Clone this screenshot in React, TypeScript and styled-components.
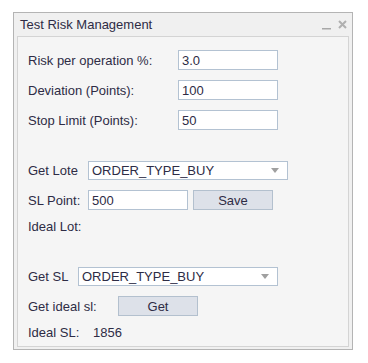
import styled, { createGlobalStyle } from 'styled-components';

const GlobalStyle = createGlobalStyle`
  html, body {
    margin: 0;
    padding: 0;
    background: #ffffff;
  }
  body {
    font-family: "Liberation Sans", Arial, sans-serif;
    color: #2e2c45;
  }
`;

const Page = styled.div`
  padding: 12px 0 0 13px;
`;

const Window = styled.div`
  width: 338px;
  height: 336px;
  border: 1px solid #b4b4b4;
  background: #f0f0f0;
  display: flex;
  flex-direction: column;
`;

const TitleBar = styled.div`
  height: 23px;
  display: flex;
  align-items: center;
  padding: 0 4px 0 6px;
`;

const Title = styled.div`
  flex: 1;
  font-size: 13px;
  color: #2e2c45;
`;

const TitleButton = styled.span`
  width: 12px;
  height: 12px;
  display: flex;
  align-items: center;
  justify-content: center;
  margin-left: 3px;
`;

const Panel = styled.div`
  flex: 1;
  margin: 0 3px 2px 3px;
  border: 1px solid #d4d4d4;
  background: #f5f5f5;
  padding: 13px 0 0 10px;
  display: flex;
  flex-direction: column;
`;

const Section = styled.div<{ $gap: number; $top: number }>`
  display: flex;
  flex-direction: column;
  gap: ${({ $gap }) => $gap}px;
  margin-top: ${({ $top }) => $top}px;
`;

const Row = styled.div<{ $h?: number }>`
  display: flex;
  align-items: center;
  height: ${({ $h }) => $h ?? 20}px;
`;

const Label = styled.span<{ $w: number }>`
  width: ${({ $w }) => $w}px;
  flex-shrink: 0;
  font-size: 13px;
  white-space: nowrap;
`;

const Value = styled.span`
  font-size: 13px;
`;

const Input = styled.div<{ $w: number }>`
  box-sizing: border-box;
  width: ${({ $w }) => $w}px;
  height: 100%;
  border: 1px solid #b3c2d2;
  background: #ffffff;
  font-size: 13px;
  display: flex;
  align-items: center;
  padding-left: 3px;
`;

const Select = styled(Input)`
  justify-content: space-between;
  padding-right: 8px;
`;

const Arrow = styled.span`
  width: 0;
  height: 0;
  border-left: 4px solid transparent;
  border-right: 4px solid transparent;
  border-top: 5px solid #a0a0a0;
`;

const Button = styled.div<{ $w: number; $ml?: number }>`
  box-sizing: border-box;
  width: ${({ $w }) => $w}px;
  height: 100%;
  margin-left: ${({ $ml }) => $ml ?? 0}px;
  border: 1px solid #b3c0ce;
  background: #dde1e9;
  font-size: 13px;
  display: flex;
  align-items: center;
  justify-content: center;
`;

export default function App() {
  return (
    <>
      <GlobalStyle />
      <Page>
        <Window>
          <TitleBar>
            <Title>Test Risk Management</Title>
            <TitleButton>
              <svg width="10" height="10" viewBox="0 0 10 10">
                <rect x="0" y="8" width="9" height="1.5" fill="#a8a8a8" />
              </svg>
            </TitleButton>
            <TitleButton>
              <svg width="9" height="9" viewBox="0 0 9 9">
                <path d="M1 1 L8 8 M8 1 L1 8" stroke="#b0b0b0" strokeWidth="2" />
              </svg>
            </TitleButton>
          </TitleBar>
          <Panel>
            <Section $gap={10} $top={0}>
              <Row>
                <Label $w={150}>Risk per operation %:</Label>
                <Input $w={100}>3.0</Input>
              </Row>
              <Row>
                <Label $w={150}>Deviation (Points):</Label>
                <Input $w={100}>100</Input>
              </Row>
              <Row>
                <Label $w={150}>Stop Limit (Points):</Label>
                <Input $w={100}>50</Input>
              </Row>
            </Section>
            <Section $gap={10} $top={31}>
              <Row $h={19}>
                <Label $w={60}>Get Lote</Label>
                <Select $w={200}>
                  ORDER_TYPE_BUY
                  <Arrow />
                </Select>
              </Row>
              <Row>
                <Label $w={60}>SL Point:</Label>
                <Input $w={100}>500</Input>
                <Button $w={80} $ml={5}>Save</Button>
              </Row>
              <Row $h={12}>
                <Label $w={60}>Ideal Lot:</Label>
              </Row>
            </Section>
            <Section $gap={10} $top={35}>
              <Row $h={19}>
                <Label $w={50}>Get SL</Label>
                <Select $w={200}>
                  ORDER_TYPE_BUY
                  <Arrow />
                </Select>
              </Row>
              <Row $h={20}>
                <Label $w={90}>Get ideal sl:</Label>
                <Button $w={80}>Get</Button>
              </Row>
              <Row $h={12}>
                <Label $w={65}>Ideal SL:</Label>
                <Value>1856</Value>
              </Row>
            </Section>
          </Panel>
        </Window>
      </Page>
    </>
  );
}
